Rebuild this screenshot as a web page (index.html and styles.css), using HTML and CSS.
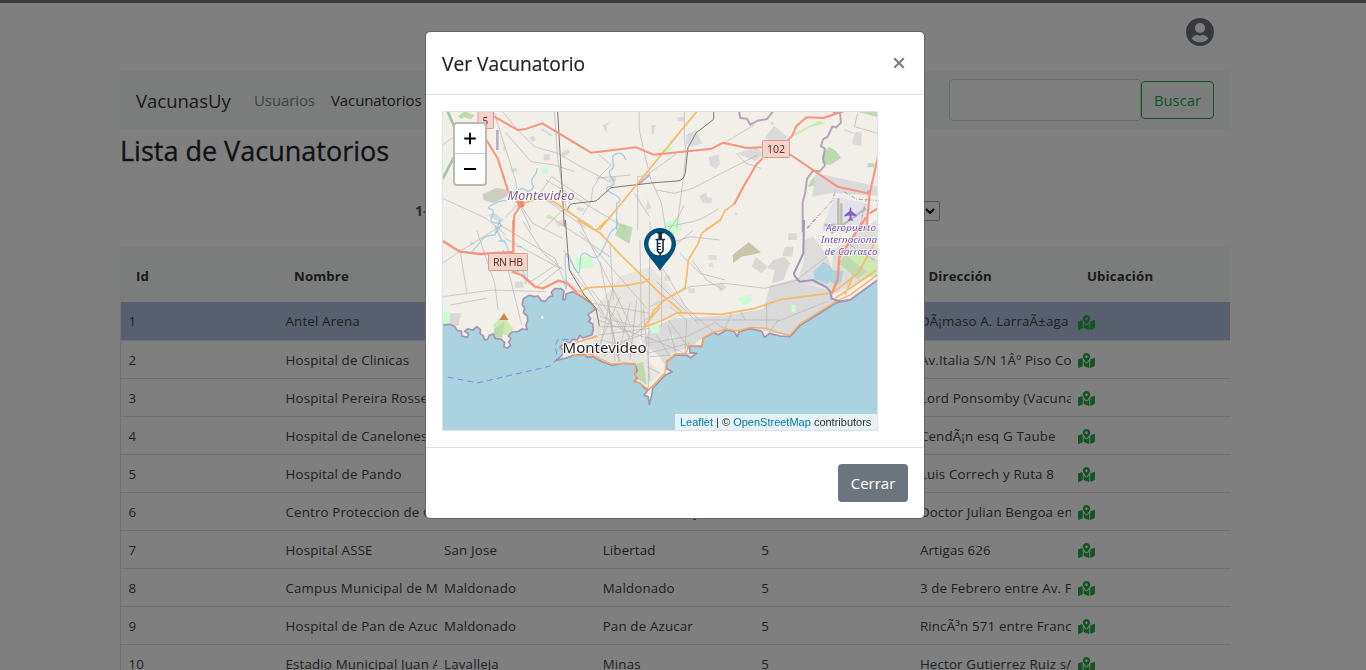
FILE: index.html
```html
<!DOCTYPE html>
<html lang="es">
<head>
<meta charset="utf-8">
<title>VacunasUy</title>
<link rel="stylesheet" href="styles.css">
</head>
<body>
<svg width="0" height="0" class="defs">
  <symbol id="map-pin" viewBox="0 0 576 512"><path d="M288 0c-69.59 0-126 56.41-126 126 0 56.26 82.35 158.8 113.9 196.02 6.39 7.54 17.82 7.54 24.2 0C331.65 284.8 414 182.26 414 126 414 56.41 357.59 0 288 0zm0 168c-23.2 0-42-18.8-42-42s18.8-42 42-42 42 18.8 42 42-18.8 42-42 42zM20.12 215.95A32.006 32.006 0 0 0 0 245.66v250.32c0 11.32 11.43 19.06 21.94 14.86L160 448V214.92c-8.84-15.98-16.07-31.54-21.25-46.42L20.12 215.95zM288 359.67c-14.07 0-27.38-6.18-36.51-16.96-19.66-23.2-40.57-49.62-59.49-76.72v182l192 64V266c-18.92 27.09-39.82 53.52-59.49 76.72-9.13 10.77-22.44 16.95-36.51 16.95zm266.06-198.51L416 224v288l139.88-55.95A31.996 31.996 0 0 0 576 426.34V176.02c0-11.32-11.43-19.06-21.94-14.86z"/></symbol>
</svg>
<div class="page">
  <header class="userbar">
    <svg class="avatar" viewBox="0 0 28 28"><circle cx="14" cy="14" r="14" fill="#6c757d"/><circle cx="14" cy="10" r="5.1" fill="#fff"/><path d="M5.700 20.500C7 18 9.500 17 11 17c1 0 1.500.7 3 .7s2-.7 3-.7c1.500 0 4 1 5.300 3.500C20.500 23 17.500 24.300 14 24.300S7.500 23 5.700 20.500z" fill="#fff"/></svg>
  </header>
  <nav class="navbar">
    <a class="brand">VacunasUy</a>
    <a class="link">Usuarios</a>
    <a class="link active">Vacunatorios</a>
    <form class="search"><input type="text" class="search-input" aria-label="Buscar"><button type="button" class="btn-search">Buscar</button></form>
  </nav>
  <h1 class="title">Lista de Vacunatorios</h1>
  <div class="pager"><b class="range">1-10</b><span class="select"><svg viewBox="0 0 10 6" width="10" height="6"><path d="M1 1l4 4 4-4" fill="none" stroke="#111" stroke-width="2"/></svg></span></div>
  <div class="table">
    <div class="row head"><span>Id</span><span>Nombre</span><span></span><span></span><span></span><span>Dirección</span><span>Ubicación</span></div>
    <div class="row selected"><span>1</span><span>Antel Arena</span><span></span><span></span><span></span><span>DÃ¡maso A. LarraÃ±aga</span><span><svg class="pin"><use href="#map-pin"/></svg></span></div>
    <div class="row"><span>2</span><span>Hospital de Clinicas</span><span></span><span></span><span></span><span>Av.Italia S/N 1Âº Piso Co</span><span><svg class="pin"><use href="#map-pin"/></svg></span></div>
    <div class="row"><span>3</span><span>Hospital Pereira Rossell</span><span></span><span></span><span></span><span>Lord Ponsomby (Vacuna</span><span><svg class="pin"><use href="#map-pin"/></svg></span></div>
    <div class="row"><span>4</span><span>Hospital de Canelones</span><span></span><span></span><span></span><span>CendÃ¡n esq G Taube</span><span><svg class="pin"><use href="#map-pin"/></svg></span></div>
    <div class="row"><span>5</span><span>Hospital de Pando</span><span></span><span></span><span></span><span>Luis Correch y Ruta 8</span><span><svg class="pin"><use href="#map-pin"/></svg></span></div>
    <div class="row"><span>6</span><span>Centro Proteccion de C</span><span></span><span>Ciudad del Playa</span><span></span><span>Doctor Julian Bengoa en</span><span><svg class="pin"><use href="#map-pin"/></svg></span></div>
    <div class="row"><span>7</span><span>Hospital ASSE</span><span>San Jose</span><span>Libertad</span><span>5</span><span>Artigas 626</span><span><svg class="pin"><use href="#map-pin"/></svg></span></div>
    <div class="row"><span>8</span><span>Campus Municipal de M</span><span>Maldonado</span><span>Maldonado</span><span>5</span><span>3 de Febrero entre Av. F</span><span><svg class="pin"><use href="#map-pin"/></svg></span></div>
    <div class="row"><span>9</span><span>Hospital de Pan de Azuc</span><span>Maldonado</span><span>Pan de Azucar</span><span>5</span><span>RincÃ³n 571 entre Franc</span><span><svg class="pin"><use href="#map-pin"/></svg></span></div>
    <div class="row"><span>10</span><span>Estadio Municipal Juan A</span><span>Lavalleja</span><span>Minas</span><span>5</span><span>Hector Gutierrez Ruiz s/</span><span><svg class="pin"><use href="#map-pin"/></svg></span></div>
  </div>
</div>
<div class="backdrop">
  <section class="modal">
    <header class="modal-head"><h2 class="modal-title">Ver Vacunatorio</h2><svg class="close" viewBox="0 0 12 12"><path d="M1.200 1.200l9.600 9.600m0-9.600l-9.600 9.600" stroke="#7f7f7f" stroke-width="2.200"/></svg></header>
    <div class="modal-body">
      <div class="map">
        <svg class="map-art" viewBox="443 112 434 318">
          <rect x="443" y="112" width="434" height="318" fill="#f2efe9"/>
          <!-- parks, villages and built-up areas -->
          <g transform="translate(440 220) scale(.33333)">
            <path fill="#dadada" d="M605 365l25-35 70-35 150-8 120-20 20-70 75-20 30 12 75 22 20 38-140 100-120-25-130 20-45 35-65 22-12 40-18-30z"/>
            <path fill="#dedddc" d="M1090 60l30-10 42 60 20 50-5 60-35-22-70-15 20-60zM1180 90l130-90v160l-120 60-18-20z"/>
            <path fill="#e8e5e0" d="M470 260l70-90 90-30 60 60 70 85-130 20-35 50 20 60 50 45-60 42-30-60-60 0-70-25-20-60z"/>
            <path fill="#cdebb0" d="M1200 120l40-40 70 50v40l-50 0zM160 315l28-30 32 40-10 20-45 0z"/>
            <path fill="#bddab1" d="M1195 130l22-25 65 50-30 22zM165 325l28-18-8 55-28-15zM580 435l30-10 10 70-28-20zM525 45l15-35 38 12-10 50z"/>
            <path fill="#aad3df" d="M1120 155l30-30 20 12 10 15 30 0-5 30-15 18-20-17-10 10-22-12-14 0z"/>
            <path fill="#c9c5a8" d="M878 105l48-38 37 30-28 8-28 4-27 20z"/>
            <path fill="#d9d8d5" d="M935 140l12-30 35 30-17 20zM1000 120l35-10 15 20-20 50-35 10 10-40-25-5zM8 280l55 0-8 38-47-6zM1035 80l25 0-3 30-30-3zM1045 40h25v20h-25zM225 185h25v18h-25z"/>
            <path fill="#cbfbcf" d="M8 275h22v40H8zM405 115l45-7 12 35-50 5zM675 10l40-20 12 40-32 15zM895 235l37-12 5 22-25 12zM635 315l20-8 5 30-28 5zM1055 255h12v22h-12zM690 345h12v15h-12z"/>
            <path fill="#ddd" d="M745 205h20v15h-20zM830 195l15-10 15 18-20 12zM680 95l20-10 5 18-20 5zM805 105h25v15h-25zM345 5l30-8 8 18-28 5zM90 65h12v10H90zM805 130l12-3 5 15h-14zM670 170l18-8 4 18-18 4z"/>
          </g>
          <g transform="translate(426 30) scale(.33333)">
            <path fill="#bddab1" d="M97 258l20-14 28 12-10 12-20-6-10 5zM580 592l15-8 14 5v15h-28zM1190 375l18-25 22 12 15 22-32 22-25-8zM1155 450l15-12-5 28-20 5zM1240 452h20l10 8-30 8zM1325 400h20v12h-20zM1290 244h66v18z"/>
            <path fill="#cdcfbf" d="M170 492l40-18 38 5-5 20-40 20-30-8z"/>
            <path fill="#dadada" d="M1015 325l30-37 40 32-20 25zM932 370l60-18 20 20-25 22zM1170 430l188 40v28l-135-10-65 12zM780 315l30-15 18 40-30 12-18-12zM1280 325l10-20 18 3-2 40-26-5zM848 382l30-10 4 30-12 15-18-10zM820 498l20-10 5 15 14 2-3 15-26-2zM350 295l30 20-3 5-32-20zM310 322l12-5 8 12-12 8zM405 370l20-12 8 8-20 18zM353 373h18v18h-18zM228 355l8-6 3 10-8 4zM530 285l24-10-3 6-8 4v20l-5-2zM675 285h16v6h-5l-3 24h-5zM185 555l20-5 30 20-10 10zM665 505l10 30-15 5zM455 530l20 5-5 10-18-5zM755 262h20v12h-20zM1030 278l12-3v12zM925 545l12 6-10 6zM550 445l20-5v14h-20z"/>
            <path fill="#b5b1cc" d="M210 300h8v60h-8zM636 460l35-30v8l-32 28z"/>
            <path fill="#cdebb0" d="M1105 310l75-38 20 8-48 12-43 25zM255 415h18v10h-18zM365 553l25 10-5 8-25-8zM237 310l10-5-4 12z"/>
            <path fill="#cbfbcf" d="M345 415l20-5 2 18-18 5zM695 360l50-15-15 25zM715 590l20-8 12 18h-30z"/>
            <path fill="#e3e1ea" d="M1190 590l35-85h30l80 20-18 80h-127z"/>
            <g stroke="#b9bcae" stroke-width="7" fill="none"><path d="M1237 505v80M1246 520v65M1215 610l105-75M1230 585h-35"/></g>
          </g>
          <!-- minor roads -->
          <g fill="none" stroke="#b6b4b3" stroke-width="2">
            <g transform="translate(426 30) scale(.33333)">
              <path d="M50 345l55-40M205 250l65 205 5 60 25 50 15 35M50 505l130 60 60 50M230 245l45 55 50 50 70 20 70 40 95 50M245 315l70 80 70 10 60 20M510 445l105-10M385 245l10 140 25 150M640 245v55l20 90 15 60 30 65 15 85M635 440l25-3 90-65M520 375l35 30-30 30-25 40-5 40-25 40M360 450l240 145M330 490l170 100M345 485l32-45 110 75M480 595l-140-100M775 245v80l5 40-8 80-20 150M625 490l45 70M240 560l40-40 40 60 90 45M350 600l60-60M635 440v160M690 480l55 10 55-15 115-60 80-40M900 335l85-50M725 590l75-15 30-10 50-30M720 615l40-60 15-30M930 370l30 30 45 15M1255 300l30 10M1295 250l-10 40 70 20"/>
            </g>
            <g transform="translate(440 220) scale(.33333)">
              <path d="M8 130l50-35 130-80M60 90l20 125M110 30l54 160 10 80M190 90l55 225M8 230l150-20 160 5M30 255l110-20M250 5l60 95 60 50M195 55l165 90M180 15l165 100 25 60 75 60M365 140l-80 65M355 130l-90 60M345 0l165 110M390 150l50 60M415 0l155 310M420 35l200 230M370 90l120 190M510 70l10 170M480 125l60 320M440 235l70 70 30 120M540 230l-60 140M600 60l5 300M460 250l170 30M480 290l110 30 40-30M475 345l155-20M470 390l150-50M490 410l125-90M570 250l-35 160M520 195l-40 190M500 260l70 90M455 210l100 130M530 270l50 110M590 240l-20 180M475 300l160 60M475 320l150 0M480 360l130 30M505 240l20 185M610 265l20 220M630 5l-5 500M665 150v170M665 140l75 125 85 75M650 185l125 125M720 100l60 60 75 20M755 120l45 60 50 30M630 260l120-60 105-10 120 15 100-25M690 260l50 40-5 100M685 300l80 110M765 300h250l-30 40M915 300l-15-30M980 255v75M1010 305l155-62M1070 180l90-70M620 350l160 70M620 370l120-20 80-40M620 400l130-30M630 410l130-10M630 120l60-30 70-60M690 70l60-20 90 10M620 440l40 20M650 345l55 90M685 315l30 110M875 280l-20 45M860 330l-40-25"/>
            </g>
          </g>
          <!-- waterways and the bay -->
          <g fill="none" stroke="#7bbfe0" stroke-width="4">
            <path transform="translate(426 30) scale(.33333)" stroke-opacity=".65" d="M333 415q2 12-10 25t0 30q-10 20-25 10t-25 5q-15 0-20 15t-15 12-35 10-10 15 5 22 15 20-5 30M600 390q-10-25-25-20t-15 10 2 20-8 20 4 25-8 25 12 22 10 28v80"/>
            <path transform="translate(440 220) scale(.33333)" stroke-opacity=".6" d="M180 0l-15 45q-30 0-40 15t-30 35M165 20l20 40q15 5 20 35l5 45q10 20 28 12t20 40M530 0q10 15-5 25t-20 25-20 45-40 10-25 30-25-10-18 30-5 25M175 63h20M230 80h15M262 145v35"/>
          </g>
          <g transform="translate(440 220) scale(.33333)">
            <path fill="#aad3df" stroke="#a893ae" stroke-width="5" stroke-linejoin="round" d="M-20 315L8 315 30 313 45 320 52 332 64 333 66 348 82 352 86 342 74 334 84 326 98 331 110 320 122 329 120 341 130 348 134 360 143 358 148 346 160 342 166 356 184 358 194 368 192 380 202 384 212 376 206 366 213 356 205 348 216 336 236 334 245 327 262 329 258 316 263 302 262 288 250 278 254 264 247 254 250 236 268 226 284 230 294 228 304 242 316 244 328 230 338 228 334 216 345 206 364 206 372 214 368 240 376 238 378 222 400 215 425 230 455 252 466 268 444 284 452 296 446 304 458 312 460 328 456 344 428 354 420 346 412 360 398 358 390 368 376 366 360 382 372 392 366 406 348 422 378 414 402 406 430 402 442 412 458 410 488 426 515 436 550 430 584 432 592 452 584 462 592 476 582 484 600 490 612 503 624 510 612 526 624 530 628 554 636 522 638 505 675 466 697 455 680 446 680 426 705 405 740 406 752 414 770 400 750 398 748 378 785 380 790 354 820 338 835 344 860 330 882 334 892 350 897 336 930 326 965 334 974 352 988 340 1020 348 1050 350 1080 317 1130 286 1190 248 1230 240 1340 160V660H-20z"/>
            <path fill="none" stroke="#f5ad5b" stroke-width="4" d="M405 215L445 240 470 268M472 348L402 370 387 392 407 408 455 404 515 432 585 430 588 485 628 508 674 460 680 430 705 402 738 401 746 376 784 377 792 352 820 337 860 327 890 333 930 322 980 325 1015 338 1050 346 1080 311 1190 243 1230 225 1325 155"/>
            <path fill="none" stroke="#7777ef" stroke-width="2.500" stroke-dasharray="18 12" d="M23 471L113 489 328 439 353 416 345 376 355 358 395 358"/>
            <path fill="#f5efdf" d="M304 287h6v10h-6z"/>
          </g>
          <!-- district boundaries and railways -->
          <g transform="translate(426 30) scale(.33333)" fill="none">
            <path stroke="#a893ae" stroke-width="6" stroke-opacity=".8" d="M939 244l4 20 20 2 10 18 22-12 28-5 18-23M1220 248l22 0 3 30-14 14-12-2-14 30-14 8-6 20 12 8-6 30 6 20-16 18-20-2-18 25-5 40-8 30v90"/>
            <path stroke="#b49bb9" stroke-width="3" stroke-dasharray="12 5 3 5" d="M1145 595l75-85 8-30M1255 485l35 22 70 5M1327 480l-28 120"/>
            <path stroke="#777" stroke-width="3" d="M395 245l20 345M863 245v23l-52 40-25 45-8 75q-5 25-25 25l-68 5-130 15-45 40-70 8q-15 5-15 20"/>
          </g>
          <g transform="translate(440 220) scale(.33333)" fill="none">
            <path stroke="#777" stroke-width="3" d="M376 0l12 150 45 75 35 40 10 52"/>
            <path stroke="#a394bd" stroke-width="6" d="M1092 0l-2 100-28 60q0 10 18 25l38-5 42 22 10 12 5 22 25 8 30-4"/>
            <path stroke="#b49bb9" stroke-width="3" stroke-dasharray="12 5 3 5" d="M1100 25l35-40M1230 75l80 50"/>
          </g>
          <!-- secondary and trunk roads -->
          <g fill="none" stroke-linejoin="round">
            <g transform="translate(426 30) scale(.33333)">
              <path stroke="#72af78" stroke-width="8" stroke-opacity=".65" d="M65 245l22 50v80l-37 72"/>
              <g stroke="#f6bb68" stroke-width="5"><path d="M290 520l50-15 45 10 120 85M520 600L812 245M837 600l45-28 15-30 30-22"/></g>
              <g stroke="#f9937a" stroke-width="6"><path d="M205 260l70 40 20-2 54-18 146 88 135-16 53 22 174-18 35-18 70 16 45-2M1010 385l-20 20-20 35-15 25-30 57M1084 332l15-15 13-30 30-25 50 2 60-20M1090 372l145 98 96 21M1357 375l-26 116-10 109M1331 550l25-15M175 320l40 65 35 110 35 30-20 30-2 50"/></g>
            </g>
            <g transform="translate(440 220) scale(.33333)">
              <g stroke="#f6bb68" stroke-width="5"><path d="M412 0l70 40 60 65 118 115 65 55M500 0l-32 32M415 215l30-12 110-6 55-10 20-12M630 315l40-15 40-22 135 5 100-18 80-27 140-18M840 0l-55 40-10 30-30 50-5 50-5 35-65 38-30 30-12 28M610 322l50-60M610 322l50-18M1180 218l75-60 55-100M1215 225l25-60M1185 235l60-40 65-45"/></g>
              <g stroke="#f9937a" stroke-width="7"><path d="M0 58l60 37 60 7 100-6 0-96M215 155l30 10 40 35 25 5 45-23 25 7 30 27M1175 222l18-45 5-65 40-60 40-60"/></g>
            </g>
          </g>
          <!-- place labels -->
          <g class="shield"><rect x="478" y="110" width="15.500" height="18.500" rx="1"/><rect x="762.500" y="140.500" width="27" height="17" rx="1"/><rect x="488.500" y="253.500" width="39" height="17" rx="1"/><text x="482.500" y="125" font-size="10">5</text><text x="767" y="153" font-size="10.500">102</text><text x="493" y="266" font-size="10.500" textLength="30">RN HB</text></g>
          <circle cx="521" cy="204" r="3.500" fill="#f58a71"/>
          <path d="M504 313l-4.500 7h9z" fill="#d08548"/>
          <text class="district" x="507.500" y="200" textLength="67">Montevideo</text>
          <text class="city" x="562.500" y="353" textLength="84">Montevideo</text>
          <g class="airport"><text x="826" y="231" textLength="50">Aeropuerto</text><text x="821" y="243" textLength="58.500">Internacional</text><text x="824.500" y="255" textLength="53">de Carrasco</text></g>
          <path fill="#8461c4" d="M850.500 207q-1 1-1 4l-5 4v1.500l5-1v3l-1.500 1.500v1l2.500-.7 2.500.7v-1l-1.500-1.500v-3l5 1v-1.500l-5-4q0-3-1-4z"/>
          <path fill="#00527c" d="M660 271c-4-8-16-17-16-27a16 16 0 0 1 32 0c0 10-12 19-16 27z"/>
          <circle cx="660" cy="244" r="11.500" fill="#fff"/>
          <g fill="none" stroke="#102d43" stroke-width="1.600"><path d="M657 232.800h6.500"/><path d="M660.200 233v6" stroke-width="3.500"/><path d="M655.500 239.500h9.500M657.500 240v11l1.500 1.800h2.500l1.500-1.800v-11M660.200 252.500v4.500"/><path d="M658 243.500h2.800M658 246.500h2.800M658 249.500h2.800" stroke-width="1"/></g>
        </svg>
        <div class="zoom-ctl"><svg viewBox="0 0 30 30"><path d="M9 15h12M15 9v12"/></svg><svg viewBox="0 0 30 30"><path d="M9 15h12"/></svg></div>
        <div class="credit"><a>Leaflet</a> | © <a>OpenStreetMap</a> contributors</div>
      </div>
    </div>
    <footer class="modal-foot"><button class="btn-close">Cerrar</button></footer>
  </section>
</div>
</body>
</html>
```
FILE: styles.css
```css
* { box-sizing: border-box; }
body { margin: 0; height: 670px; overflow: hidden; background: #fff; color: #212529; font-family: "Open Sans", "Noto Sans", sans-serif; font-size: 16px; line-height: 1.5; }
.defs { position: absolute; }
.page { height: 670px; border-top: 3px solid #777; overflow: hidden; padding: 0 136px 0 120px; }
.userbar { height: 68px; display: flex; justify-content: flex-end; padding: 15px 16px 0 0; }
.avatar { width: 28px; height: 28px; }
.navbar { height: 58px; background: #f6fbf9; display: flex; align-items: center; padding: 0 16px; font-size: 15px; }
.brand { font-size: 18.5px; margin-right: 23px; color: #333; width: 95px; padding-top: 2px; }
.link { color: #858887; width: 61px; margin-right: 16px; letter-spacing: -.1px; }
.link.active { color: #333; }
.search { margin-left: auto; display: flex; align-items: center; }
.search-input { width: 192px; height: 42px; border: 1px solid #ced4da; border-radius: 4px; background: #fff; }
.btn-search { width: 73px; height: 38px; border: 1px solid #28a745; border-radius: 4px; background: none; color: #28a745; font: 14.8px "Open Sans", sans-serif; padding: 0; }
.title { margin: 4px 0 0; font-size: 27px; font-weight: 500; line-height: 36px; -webkit-text-stroke: .3px #212529; }
.pager { height: 30px; margin: 27px 0 0 295px; width: 525px; display: flex; align-items: center; justify-content: space-between; font-size: 14px; color: #555; }
.range { margin-top: -2px; }
.select { width: 60px; height: 20px; border: 1px solid #aaa; border-radius: 2px; display: flex; align-items: center; justify-content: flex-end; padding-right: 4px; }
.table { margin-top: 21px; border-left: 1px solid #e4e4e4; font-size: 13.3px; }
.row { display: grid; grid-template-columns: 157px repeat(5, 158.6px) 159px; height: 38px; align-items: center; border-bottom: 1px solid #dfe0e1; color: #3c4248; letter-spacing: .17px; padding-top: 2px; }
.row span { padding-left: 7.5px; overflow: hidden; white-space: nowrap; }
.row.head { height: 55px; background: #f6fbf9; font-weight: 700; font-size: 13.2px; border: 0; color: #303538; margin-left: -1px; padding-top: 5px; grid-template-columns: 158px repeat(5, 158.6px) 159px; }
.row.head span { padding-left: 16px; }
.row.selected { height: 39px; background: #b0c0de; }
.row .pin { display: block; width: 17px; height: 15px; fill: #28a745; }
.backdrop { position: fixed; inset: 0; background: rgba(0,0,0,.5); }
.modal { width: 500px; height: 488px; margin: 31px 0 0 425px; background: #fff; border: 1px solid #666; border-radius: 5px; background-clip: padding-box; }
.modal-head { height: 63px; border-bottom: 1px solid #dee2e6; padding: 0 19px 0 16px; display: flex; align-items: center; justify-content: space-between; }
.modal-title { margin: 2px 0 0; font-size: 19.2px; font-weight: 500; -webkit-text-stroke: .2px #212529; }
.close { width: 12px; height: 12px; }
.modal-body { height: 353px; padding: 16px; border-bottom: 1px solid #dee2e6; }
.map { position: relative; width: 436px; height: 320px; border: 1px solid #dee2e6; overflow: hidden; }
.map-art { display: block; width: 434px; height: 318px; }
.shield rect { fill: #f4d4ca; stroke: #d99b8c; }
.shield text { fill: #6b302b; font-family: "Noto Sans", sans-serif; }
.district { font: italic 12.5px "Noto Sans", sans-serif; fill: #815983; stroke: #fff; stroke-width: 2px; paint-order: stroke; }
.city { font: 15px "Noto Sans", sans-serif; fill: #222; stroke: #fff; stroke-width: 2px; paint-order: stroke; }
.airport { font: italic 9.8px "Noto Sans", sans-serif; fill: #7049b0; stroke: #fff; stroke-width: 1.5px; paint-order: stroke; }
.zoom-ctl { position: absolute; left: 10px; top: 10px; width: 34px; height: 64px; border: 2px solid #bdb9b5; border-radius: 4px; background: #fff; }
.zoom-ctl svg { display: block; width: 30px; height: 30px; stroke: #000; stroke-width: 2; }
.zoom-ctl svg:first-child { border-bottom: 1px solid #ccc; }
.credit { position: absolute; right: 0; bottom: 0; height: 16px; width: 202px; padding: 0 5px; background: rgba(255,255,255,.7); font: 11px/16px "Liberation Sans", sans-serif; color: #333; white-space: nowrap; }
.credit a { color: #0078a8; }
.modal-foot { height: 70px; padding: 16px; display: flex; justify-content: flex-end; }
.btn-close { width: 70px; height: 38px; background: #6c757d; color: #fff; border: 0; border-radius: 4px; font: 15px "Open Sans", sans-serif; padding: 0; }
```
